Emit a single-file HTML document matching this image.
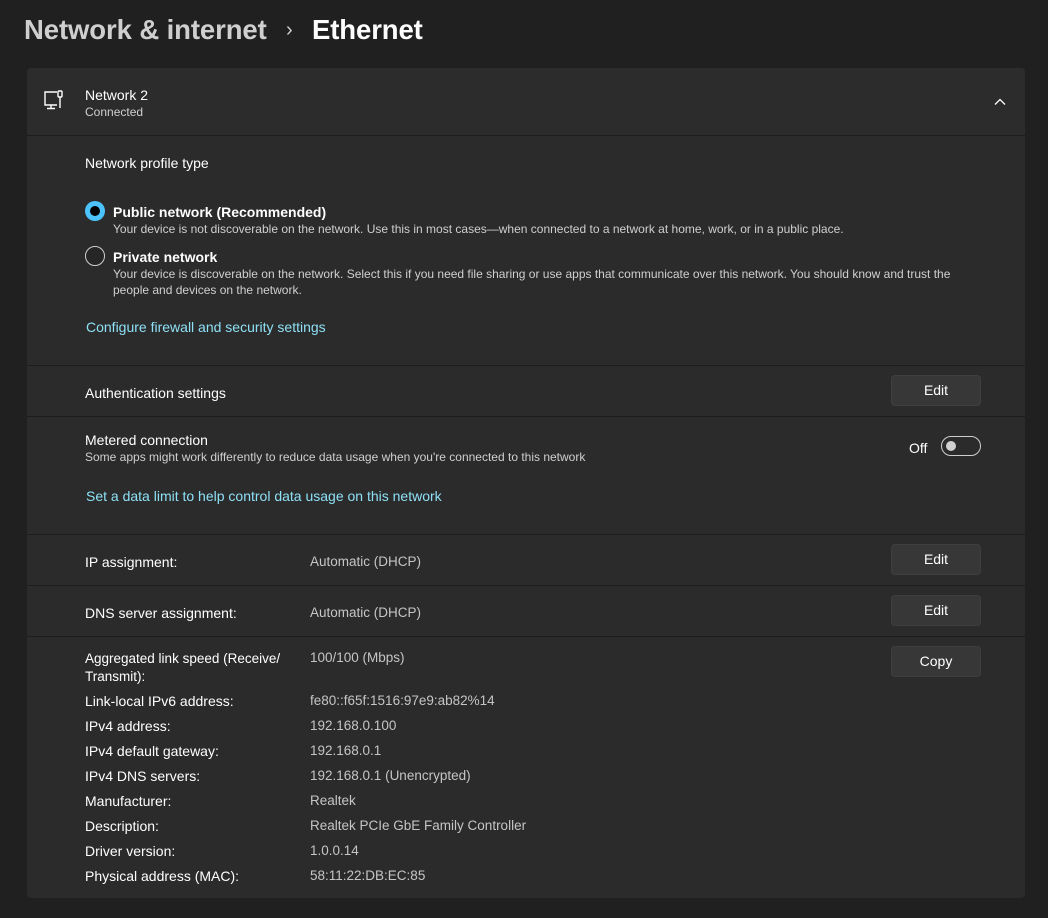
<!DOCTYPE html>
<html><head><style>
*{margin:0;padding:0;box-sizing:border-box}
body{width:1048px;height:918px;background:#202020;font-family:"Liberation Sans",sans-serif;color:#fff;position:relative;overflow:hidden}
.a{position:absolute;white-space:nowrap}
.t{font-size:14px;color:#fff}
.s{font-size:12px;color:#cfcfcf}
.v{font-size:13.5px;color:#c5c5c5}
.lnk{font-size:14px;color:#8ee0f5}
.btn{position:absolute;left:891px;width:90px;height:31px;background:#373737;border:1px solid #3f3f3f;border-radius:4px;font-size:14px;color:#fff;text-align:center;line-height:29px}
.sep{position:absolute;left:27px;width:998px;height:1px;background:#1d1d1d}
.card{position:absolute;left:27px;width:998px;background:#2b2b2b}
</style></head><body>
<div class="a" style="left:24px;top:14px;font-size:27.5px;color:#cfcfcf;font-weight:bold;letter-spacing:-0.1px">Network &amp; internet</div>
<div class="a" style="left:286px;top:19px;font-size:20px;color:#cfcfcf">›</div>
<div class="a" style="left:312px;top:14px;font-size:27.5px;color:#fff;font-weight:bold;letter-spacing:-0.1px">Ethernet</div>

<div class="card" style="top:68px;height:67px;border-radius:4px 4px 0 0;background:#2c2c2c"></div>
<svg class="a" style="left:43px;top:89px" width="24" height="24" viewBox="0 0 24 24" fill="none" stroke="#fff" stroke-width="1.4"><path d="M14 3H2v13h12M8 16v3M4 19.5h8"/><rect x="15" y="2" width="4" height="6" rx="1"/><path d="M17 8v11"/></svg>
<div class="a t" style="left:85px;top:87px">Network 2</div>
<div class="a s" style="left:85px;top:105px">Connected</div>
<svg class="a" style="left:994px;top:96px" width="12" height="12" viewBox="0 0 12 12" fill="none" stroke="#fff" stroke-width="1.3"><path d="M1 8.5l5-5 5 5"/></svg>
<div class="sep" style="top:135px"></div>

<div class="card" style="top:136px;height:762px;background:#2b2b2b;border-radius:0 0 4px 4px"></div>
<div class="a t" style="left:85px;top:155px">Network profile type</div>
<div class="a" style="left:85px;top:201px;width:20px;height:20px;border-radius:50%;background:#4cc2ff"><div style="position:absolute;left:5px;top:5px;width:10px;height:10px;border-radius:50%;background:#000"></div></div>
<div class="a t" style="left:113px;top:204px;font-weight:bold">Public network (Recommended)</div>
<div class="a s" style="left:113px;top:222px">Your device is not discoverable on the network. Use this in most cases—when connected to a network at home, work, or in a public place.</div>
<div class="a" style="left:85px;top:246px;width:20px;height:20px;border-radius:50%;border:1px solid #cfcfcf;background:#262626"></div>
<div class="a t" style="left:113px;top:249px;font-weight:bold">Private network</div>
<div class="a s" style="left:113px;top:267px">Your device is discoverable on the network. Select this if you need file sharing or use apps that communicate over this network. You should know and trust the</div>
<div class="a s" style="left:113px;top:283px">people and devices on the network.</div>
<div class="a lnk" style="left:86px;top:319px">Configure firewall and security settings</div>
<div class="sep" style="top:365px"></div>

<div class="a t" style="left:85px;top:385px">Authentication settings</div>
<div class="btn" style="top:375px">Edit</div>
<div class="sep" style="top:416px"></div>

<div class="a t" style="left:85px;top:432px">Metered connection</div>
<div class="a s" style="left:85px;top:450px">Some apps might work differently to reduce data usage when you're connected to this network</div>
<div class="a t" style="left:909px;top:440px">Off</div>
<div class="a" style="left:941px;top:436px;width:40px;height:20px;border:1px solid #cfcfcf;border-radius:10px"><div style="position:absolute;left:4px;top:4px;width:10px;height:10px;border-radius:50%;background:#d0d0d0"></div></div>
<div class="a lnk" style="left:86px;top:488px">Set a data limit to help control data usage on this network</div>
<div class="sep" style="top:534px"></div>

<div class="a t" style="left:85px;top:554px">IP assignment:</div>
<div class="a v" style="left:310px;top:554px">Automatic (DHCP)</div>
<div class="btn" style="top:544px">Edit</div>
<div class="sep" style="top:585px"></div>
<div class="a t" style="left:85px;top:605px">DNS server assignment:</div>
<div class="a v" style="left:310px;top:605px">Automatic (DHCP)</div>
<div class="btn" style="top:595px">Edit</div>
<div class="sep" style="top:636px"></div>

<div class="btn" style="top:646px">Copy</div>
<div class="a t" style="left:85px;top:650px;line-height:18px;font-size:13.5px">Aggregated link speed (Receive/<br>Transmit):</div>
<div class="a v" style="left:310px;top:650px">100/100 (Mbps)</div>
<div class="a t" style="left:85px;top:693px">Link-local IPv6 address:</div><div class="a v" style="left:310px;top:693px">fe80::f65f:1516:97e9:ab82%14</div>
<div class="a t" style="left:85px;top:718px">IPv4 address:</div><div class="a v" style="left:310px;top:718px">192.168.0.100</div>
<div class="a t" style="left:85px;top:743px">IPv4 default gateway:</div><div class="a v" style="left:310px;top:743px">192.168.0.1</div>
<div class="a t" style="left:85px;top:768px">IPv4 DNS servers:</div><div class="a v" style="left:310px;top:768px">192.168.0.1 (Unencrypted)</div>
<div class="a t" style="left:85px;top:793px">Manufacturer:</div><div class="a v" style="left:310px;top:793px">Realtek</div>
<div class="a t" style="left:85px;top:818px">Description:</div><div class="a v" style="left:310px;top:818px">Realtek PCIe GbE Family Controller</div>
<div class="a t" style="left:85px;top:843px">Driver version:</div><div class="a v" style="left:310px;top:843px">1.0.0.14</div>
<div class="a t" style="left:85px;top:868px">Physical address (MAC):</div><div class="a v" style="left:310px;top:868px">58:11:22:DB:EC:85</div>
</body></html>
